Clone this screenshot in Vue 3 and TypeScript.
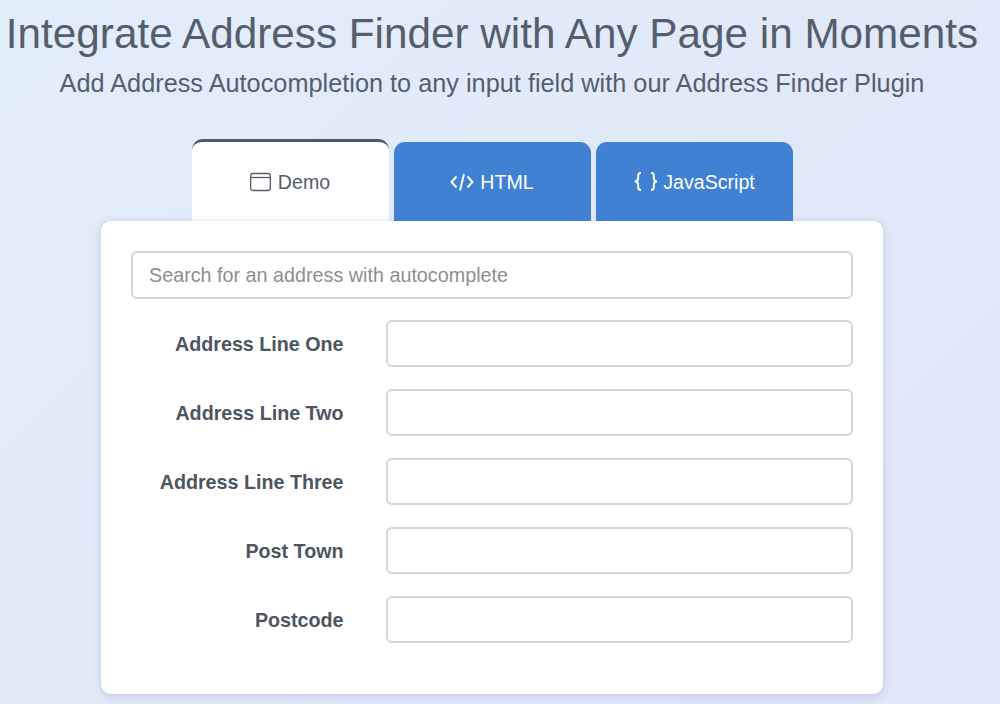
<script setup lang="ts">
const fields: string[] = ['Address Line One', 'Address Line Two', 'Address Line Three', 'Post Town', 'Postcode']
</script>

<template>
  <div class="page">
    <h1 class="title">Integrate Address Finder with Any Page in Moments</h1>
    <p class="subtitle">Add Address Autocompletion to any input field with our Address Finder Plugin</p>
    <div class="tabs">
      <div class="tab active">
        <svg class="icon" width="22" height="20" viewBox="0 0 22 20" fill="none" stroke="currentColor" stroke-width="1.3">
          <rect x="0.700" y="1.500" width="19.600" height="17" rx="2" />
          <path d="M0.700 5.500h19.600" />
        </svg>
        <span>Demo</span>
      </div>
      <div class="tab">
        <svg class="icon" width="24" height="20" viewBox="0 0 24 20" fill="none" stroke="currentColor" stroke-width="1.900">
          <path d="M6.500 4.500l-5 5.500 5 5.500M17.500 4.500l5 5.500-5 5.500M14 2L10 18.500" />
        </svg>
        <span>HTML</span>
      </div>
      <div class="tab">
        <svg class="icon" width="24" height="20" viewBox="0 0 24 20" fill="none" stroke="currentColor" stroke-width="1.900">
          <path d="M8 1c-2 0-2.800.8-2.800 2.400v3.400c0 1.400-1 2.300-3.200 2.700 2.200.4 3.200 1.300 3.200 2.700v3.400c0 1.600.8 2.400 2.800 2.400M18 1c2 0 2.800.8 2.800 2.400v3.400c0 1.400 1 2.300 3.200 2.700-2.200.4-3.200 1.300-3.200 2.700v3.400c0 1.600-.8 2.400-2.800 2.400" />
        </svg>
        <span>JavaScript</span>
      </div>
    </div>
    <div class="card">
      <input class="input search" type="text" placeholder="Search for an address with autocomplete" />
      <div v-for="f in fields" :key="f" class="row">
        <label class="label">{{ f }}</label>
        <input class="input" type="text" />
      </div>
    </div>
  </div>
</template>

<style>
html, body { margin: 0; }
</style>

<style scoped>
.page {
  width: 1000px;
  height: 704px;
  overflow: hidden;
  box-sizing: border-box;
  padding-right: 16px;
  background: linear-gradient(135deg, #e2edfb 0%, #e1e6f8 100%);
  font-family: "Liberation Sans", Arial, sans-serif;
  color: #555e6c;
  display: flex;
  flex-direction: column;
  align-items: center;
}
.title {
  margin: 11px 0 0;
  font-size: 42.250px;
  line-height: 46px;
  font-weight: 400;
  white-space: nowrap;
}
.subtitle {
  margin: 12px 0 0;
  font-size: 25.300px;
  line-height: 28px;
  white-space: nowrap;
}
.tabs {
  display: flex;
  gap: 5px;
  align-items: flex-end;
  margin: 42px 0 0;
  height: 82px;
}
.tab {
  width: 197px;
  height: 79px;
  box-sizing: border-box;
  padding-top: 1px;
  background: #4181d3;
  color: #fff;
  border-radius: 11px 11px 0 0;
  display: flex;
  align-items: center;
  justify-content: center;
  gap: 6px;
  font-size: 19.600px;
}
.tab.active {
  height: 82px;
  background: #fff;
  color: #555e6c;
  border-top: 3px solid #4d5868;
}
.icon { flex: none; }
.card {
  width: 782px;
  height: 473px;
  box-sizing: border-box;
  background: #fff;
  border-radius: 10px;
  box-shadow: 0 2px 8px rgba(90, 105, 160, 0.25);
  padding: 30px;
  display: flex;
  flex-direction: column;
  gap: 21px;
}
.input {
  box-sizing: border-box;
  height: 47.500px;
  width: 467px;
  border: 2px solid #d6d6d6;
  border-radius: 6px;
  background: #fff;
  padding: 1px 16px 0;
  font-family: inherit;
  font-size: 19.760px;
  outline: none;
}
.input.search { width: 722px; }
.input::placeholder { color: #8e8e8e; opacity: 1; }
.row {
  display: flex;
  align-items: center;
  justify-content: space-between;
  width: 722px;
  height: 48px;
}
.label {
  width: 212.500px;
  padding-top: 1px;
  text-align: right;
  font-size: 19.700px;
  font-weight: 700;
  color: #4d5561;
}
</style>
